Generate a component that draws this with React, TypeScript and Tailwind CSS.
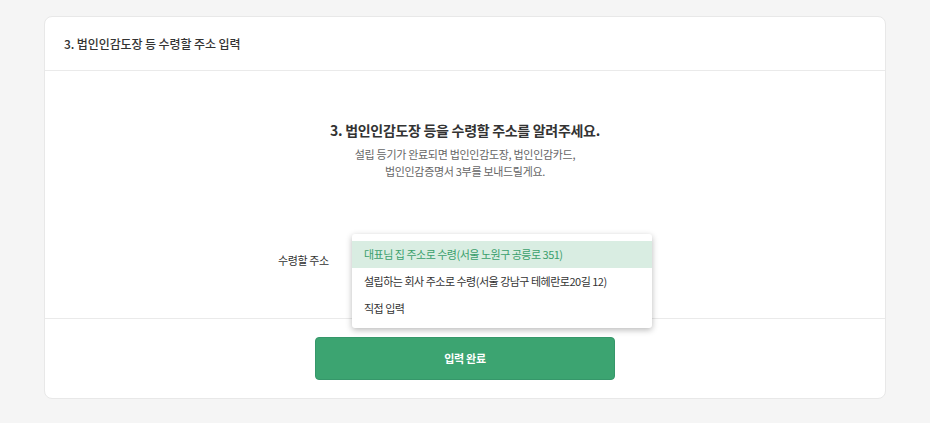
import React from "react";

export default function App() {
  const font = { fontFamily: '"Noto Sans CJK KR", "Noto Sans", sans-serif' };
  return (
    <div className="min-h-[423px] w-full bg-[#f5f5f5] pt-4 pb-6" style={font}>
      <div className="mx-[44px] rounded-lg border border-[#e8e8e8] bg-white">
        <div className="flex h-[54px] items-center border-b border-[#eaeaea] px-[19px]">
          <span className="text-[12px] font-medium tracking-[-0.1px] text-[#333]">3. 법인인감도장 등 수령할 주소 입력</span>
        </div>
        <div className="flex flex-col items-center pt-[48px] pb-[38px]">
          <h2 className="text-[14px] font-bold leading-[22px] tracking-[-0.3px] text-[#333]">3. 법인인감도장 등을 수령할 주소를 알려주세요.</h2>
          <p className="mt-[5px] text-center text-[11px] leading-[17px] tracking-[-0.3px] text-[#666]">
            설립 등기가 완료되면 법인인감도장, 법인인감카드,
            <br />
            법인인감증명서 3부를 보내드릴게요.
          </p>
          <div className="mt-[60px] flex h-[40px] items-center">
            <div className="w-[74px] text-[11px] tracking-[-0.4px] text-[#333]">수령할 주소</div>
            <div className="relative h-[40px] w-[300px]">
              <div className="absolute left-0 top-[-6px] z-10 w-[300px] rounded-[3px] bg-white pt-[7px] pb-[6px] shadow-[0_2px_6px_rgba(0,0,0,0.28)]">
                <div className="flex h-[27px] items-center bg-[#d9ede2] px-3 text-[11px] tracking-[-0.5px] text-[#3b9f6d]">
                  대표님 집 주소로 수령(서울 노원구 공릉로 351)
                </div>
                <div className="flex h-[27px] items-center px-3 text-[11px] tracking-[-0.5px] text-[#333]">
                  설립하는 회사 주소로 수령(서울 강남구 테헤란로20길 12)
                </div>
                <div className="flex h-[27px] items-center px-3 text-[11px] tracking-[-0.5px] text-[#333]">
                  직접 입력
                </div>
              </div>
            </div>
          </div>
        </div>
        <div className="flex justify-center border-t border-[#eaeaea] pt-[18px] pb-[18px]">
          <button className="h-[43px] w-[300px] rounded-[4px] border border-[#36976a] bg-[#3ca471] text-[11px] font-bold tracking-[-0.3px] text-white">
            입력 완료
          </button>
        </div>
      </div>
    </div>
  );
}
